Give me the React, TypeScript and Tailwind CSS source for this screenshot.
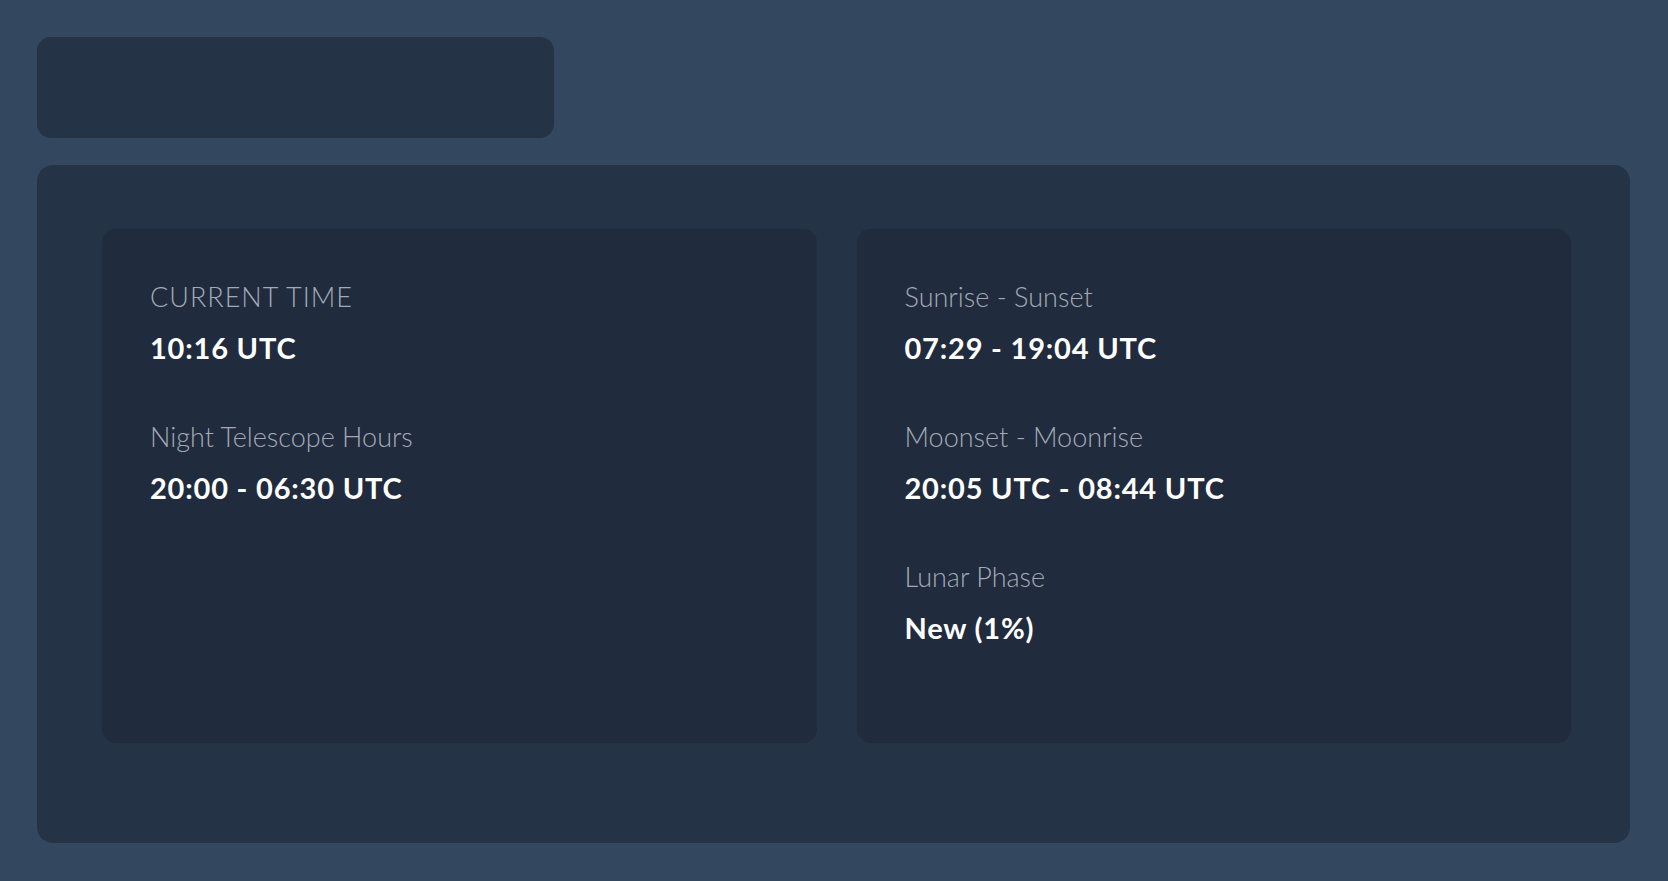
import React from "react";

function Block({ label, value, caps }: { label: string; value: string; caps?: boolean }) {
  return (
    <div className="flex flex-col">
      <div
        className={
          caps
            ? "text-[27px] leading-[40px] font-light text-[#a3aab5] tracking-[1px]"
            : "text-[27px] leading-[40px] font-light text-[#a3aab5]"
        }
      >
        {label}
      </div>
      <div className="mt-[11px] text-[29px] leading-[40px] font-bold text-white tracking-[0.8px]">
        {value}
      </div>
    </div>
  );
}

export default function App() {
  return (
    <div
      className="min-h-screen bg-[#33475f] pl-[37px] pr-[38px] pt-[37px] pb-[38px]"
      style={{ fontFamily: "Lato, 'Open Sans', sans-serif" }}
    >
      <div className="w-[517px] h-[101px] rounded-[14px] bg-[#253347]" />
      <div className="mt-[27px] h-[678px] rounded-[16px] bg-[#253347] pl-[65px] pr-[59px] pt-[64px]">
        <div className="grid grid-cols-2 gap-[40px] h-[514px]">
          <div className="rounded-[14px] bg-[#212b3e] p-[48px] flex flex-col gap-[49px]">
            <Block label="CURRENT TIME" value="10:16 UTC" caps />
            <Block label="Night Telescope Hours" value="20:00 - 06:30 UTC" />
          </div>
          <div className="rounded-[14px] bg-[#212b3e] p-[48px] flex flex-col gap-[49px]">
            <Block label="Sunrise - Sunset" value="07:29 - 19:04 UTC" />
            <Block label="Moonset - Moonrise" value="20:05 UTC - 08:44 UTC" />
            <Block label="Lunar Phase" value="New (1%)" />
          </div>
        </div>
      </div>
    </div>
  );
}
